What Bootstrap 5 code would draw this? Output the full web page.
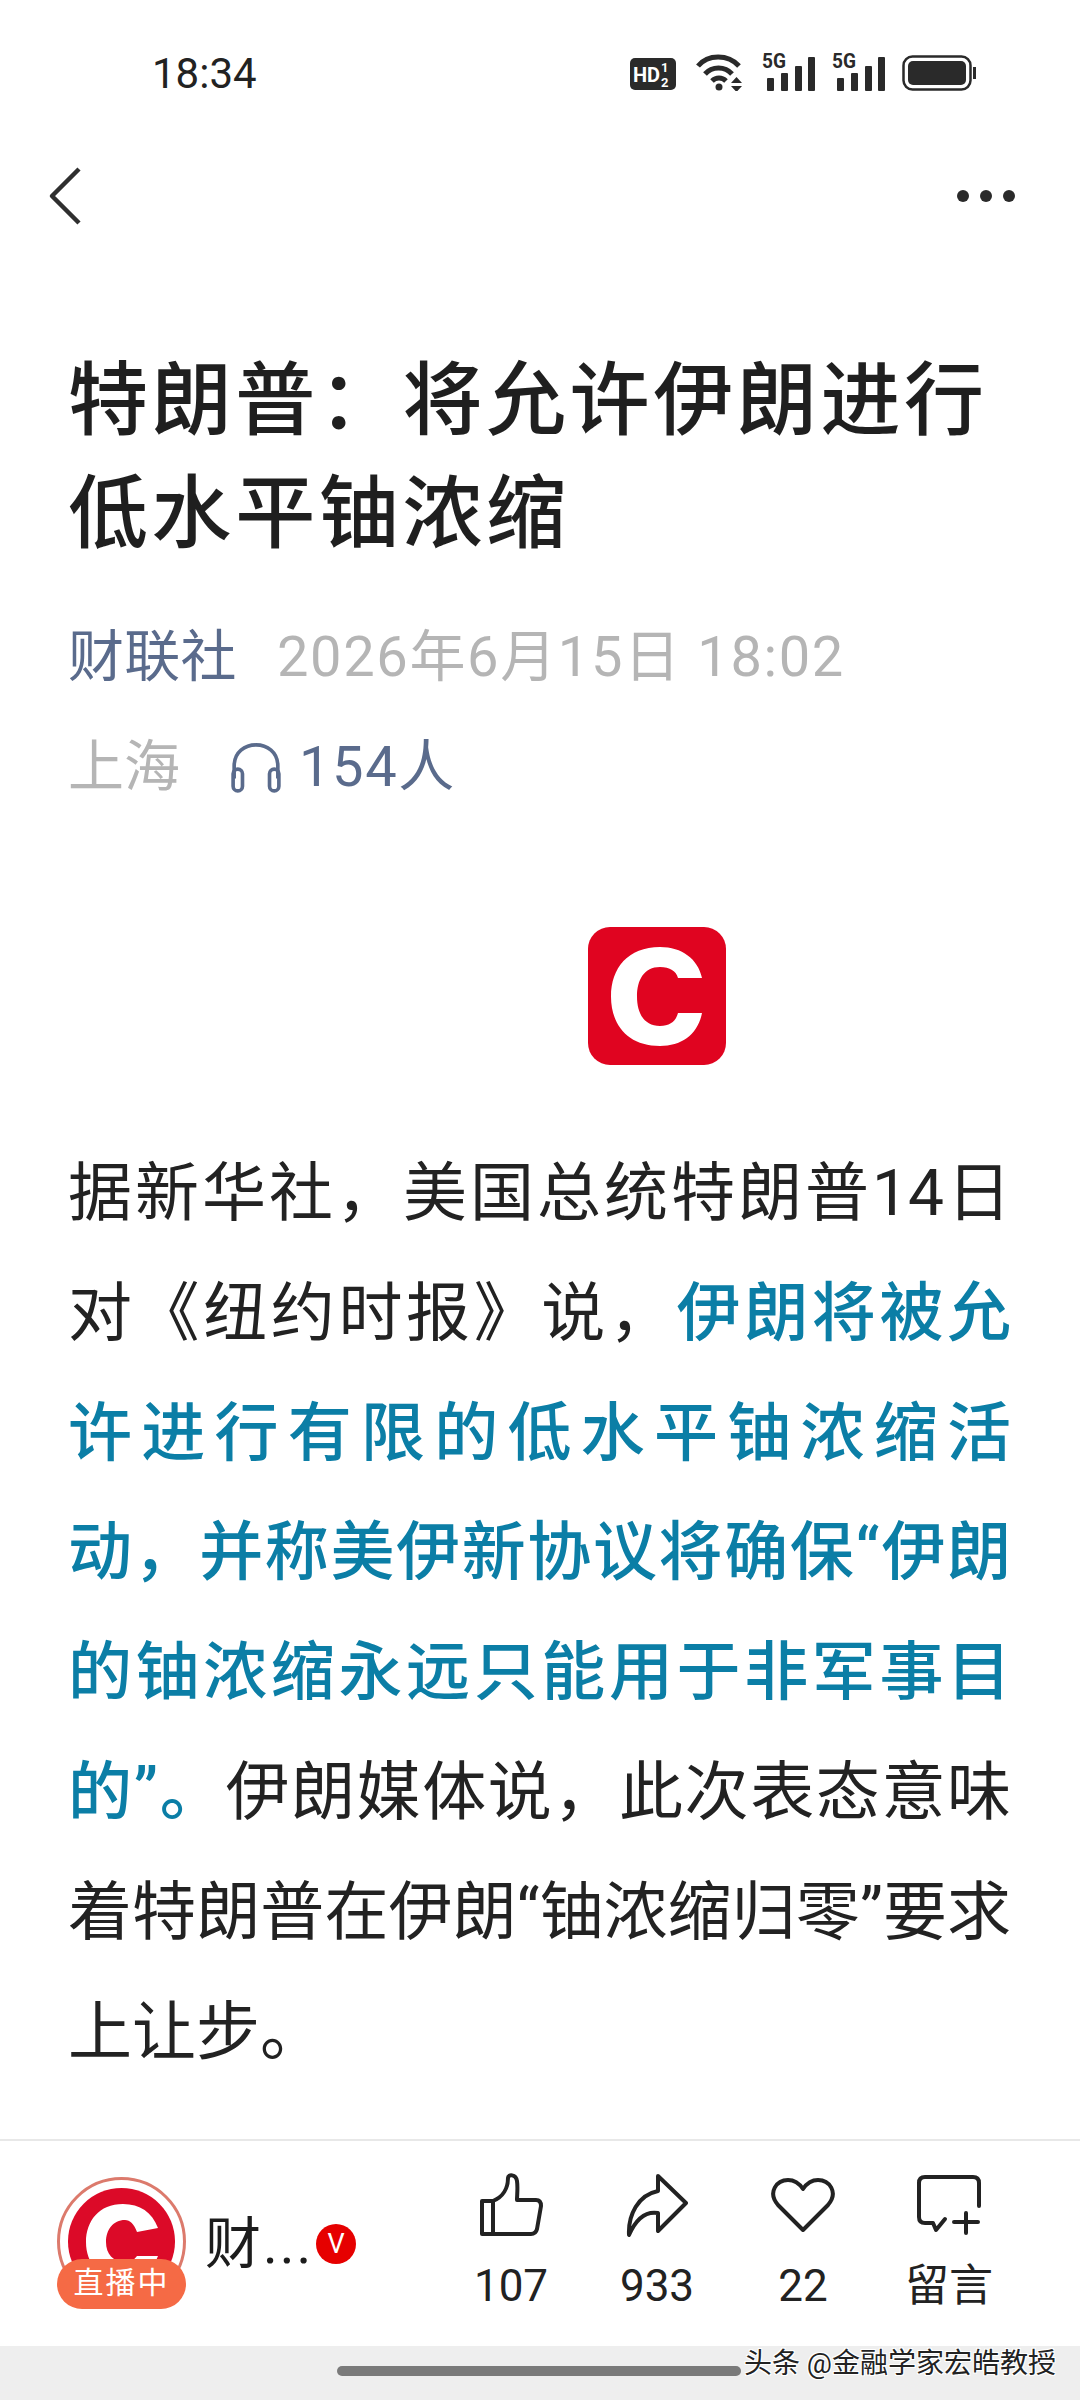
<!DOCTYPE html>
<html lang="zh-CN">
<head>
  <meta charset="UTF-8" />
  <title>特朗普：将允许伊朗进行低水平铀浓缩</title>
  <link href="https://cdn.jsdelivr.net/npm/bootstrap@5.3.0/dist/css/bootstrap.min.css" rel="stylesheet" />
  <style>
    html, body { height: 2400px; }
    body {
      width: 1080px;
      overflow: hidden;
      background: #fff;
      color: #1c1c1c;
      font-family: Roboto, "Noto Sans CJK SC", sans-serif;
    }
    .phone-page { height: 2400px; }

    .status-row { height: 144px; padding: 47px 0 0 152px; }
    .status-time { font-size: 42px; line-height: 40px; color: #222; width: 478px; margin-top: 7px; }
    .status-icons { gap: 16px; }

    .top-row { height: 116px; padding: 0 64px 12px 46px; }

    .article-body { padding: 0 69px 0 68px; }
    .article-title {
      font-size: 80px;
      line-height: 113px;
      font-weight: 500;
      letter-spacing: 3.6px;
      color: #1f1f1f;
      margin: 85px 0 0;
    }
    .meta-line { font-size: 56px; line-height: 64px; letter-spacing: 1.65px; color: #b5b5b5; }
    .meta-one { margin-top: 54px; }
    .meta-two { margin-top: 46px; }
    .meta-author { color: #5a6b8c; margin-right: 40px; letter-spacing: .3px; }
    .meta-place { width: 161px; letter-spacing: 0; }
    .meta-listen { color: #5a6b8c; gap: 16px; letter-spacing: 1.6px; }

    .logo-wrap { margin: 128px 0 0 520px; height: 138px; }

    .article-text {
      font-size: 64px;
      line-height: 119.8px;
      text-align: justify;
      color: #222;
      margin: 69px 0 0;
    }
    .hl-text { color: #0b7ea6; font-weight: 500; }

    .action-bar {
      height: 207px;
      border-top: 2px solid #e8e8e8;
      padding-left: 57px;
    }
    .avatar-box { width: 129px; height: 133px; }
    .avatar-ring { width: 129px; height: 129px; border: 3px solid #dc7a6c; border-radius: 50%; padding: 8px; background: #fff; }
    .live-pill {
      position: absolute;
      left: 0; right: 0; top: 82px;
      height: 50px;
      line-height: 48px;
      border-radius: 25px;
      background: #f56a45;
      color: #fff;
      font-size: 30px;
      letter-spacing: 2px;
      text-align: center;
    }
    .author-name { font-size: 56px; line-height: 64px; margin-left: 19px; width: 111px; white-space: nowrap; letter-spacing: 2px; }
    .v-badge {
      width: 40px; height: 40px;
      border-radius: 50%;
      background: #e60000;
      color: #fff;
      font-size: 27px;
      line-height: 40px;
      text-align: center;
    }
    .action-list { margin-left: auto; margin-right: 58px; margin-bottom: 4px; }
    .action-item { width: 146px; height: 144px; }
    .action-icon { height: 70px; margin-bottom: 18px; }
    .action-label { font-size: 44px; line-height: 56px; color: #222; }

    .nav-strip { height: 54px; background: #eee; }
    .home-bar { width: 404px; height: 10px; margin: 20px 0 0 337px; border-radius: 5px; background: #7a7a7a; }
    .water-mark {
      position: absolute;
      right: 24px; top: 0;
      font-size: 28px;
      line-height: 36px;
      color: #222;
      text-shadow: -1px -1px 0 #fff, 1px 1px 0 #fff, 1px -1px 0 #fff, -1px 1px 0 #fff;
    }
  </style>
</head>
<body>

<div class="phone-page d-flex flex-column">

  <!-- status bar -->
  <div class="status-row d-flex align-items-start">
    <div class="status-time">18:34</div>
    <div class="status-icons d-flex align-items-end">
      <svg class="me-1" width="46" height="33" viewBox="0 0 46 33"><rect width="46" height="32" rx="5" fill="#2a2a2a"/><text x="3" y="24" font-family="Roboto" font-weight="700" font-size="20" fill="#fff">HD</text><text x="31" y="14" font-family="Roboto" font-weight="700" font-size="13" fill="#fff">1</text><text x="31" y="29" font-family="Roboto" font-weight="700" font-size="13" fill="#fff">2</text></svg>
      <svg width="50" height="38" viewBox="0 0 50 38" fill="none" stroke="#2a2a2a" stroke-width="5"><path d="M2 13C12 1 32 1 43 13"/><path d="M9 21C16 13 29 13 36 21"/><path d="M16 28C20 24 26 24 30 28"/><circle cx="23" cy="34" r="3.5" fill="#2a2a2a" stroke="none"/><path d="M35 30h11l-5.500-6zM35 33h11l-5.500 6z" fill="#2a2a2a" stroke="none"/></svg>
      <svg width="54" height="44" viewBox="0 -6 54 44"><text x="0" y="15" font-family="Roboto" font-weight="700" font-size="21" textLength="24" lengthAdjust="spacingAndGlyphs" fill="#2a2a2a">5G</text><rect x="5" y="25" width="7" height="13" rx="1" fill="#2a2a2a"/><rect x="19" y="20" width="7" height="18" rx="1" fill="#2a2a2a"/><rect x="33" y="13" width="7" height="25" rx="1" fill="#2a2a2a"/><rect x="46" y="4" width="7" height="34" rx="1" fill="#2a2a2a"/></svg>
      <svg width="54" height="44" viewBox="0 -6 54 44"><text x="0" y="15" font-family="Roboto" font-weight="700" font-size="21" textLength="24" lengthAdjust="spacingAndGlyphs" fill="#2a2a2a">5G</text><rect x="5" y="25" width="7" height="13" rx="1" fill="#2a2a2a"/><rect x="19" y="20" width="7" height="18" rx="1" fill="#2a2a2a"/><rect x="33" y="13" width="7" height="25" rx="1" fill="#2a2a2a"/><rect x="46" y="4" width="7" height="34" rx="1" fill="#2a2a2a"/></svg>
      <svg width="76" height="36" viewBox="0 0 76 36"><rect x="1.500" y="1.500" width="67" height="33" rx="9" fill="none" stroke="#2a2a2a" stroke-width="2.500"/><rect x="6" y="6" width="58" height="24" rx="5" fill="#2a2a2a"/><rect x="71" y="12" width="3" height="12" fill="#2a2a2a"/></svg>
    </div>
  </div>

  <!-- back and more -->
  <div class="top-row d-flex align-items-center justify-content-between">
    <svg width="36" height="58" viewBox="0 0 36 58" fill="none" stroke="#2f2f2f" stroke-width="4.500"><path d="M33 2L6 29L33 56" stroke-linejoin="round"/></svg>
    <svg width="60" height="14" viewBox="0 0 60 14" fill="#2a2a2a"><circle cx="7" cy="7" r="6"/><circle cx="30" cy="7" r="6"/><circle cx="53" cy="7" r="6"/></svg>
  </div>

  <!-- article -->
  <div class="article-body flex-grow-1">
    <h1 class="article-title">特朗普：将允许伊朗进行低水平铀浓缩</h1>
    <div class="meta-line meta-one d-flex"><span class="meta-author">财联社</span><span>2026年6月15日 18:02</span></div>
    <div class="meta-line meta-two d-flex align-items-center">
      <span class="meta-place">上海</span>
      <span class="meta-listen d-flex align-items-center">
        <svg width="54" height="52" viewBox="0 0 50 50" fill="none" stroke="#5a6b8c" stroke-width="3.500"><path d="M4 36V24C4 -3 46 -3 46 24V36"/><rect x="3" y="27" width="9" height="21" rx="4.500"/><rect x="38" y="27" width="9" height="21" rx="4.500"/></svg>
        154人
      </span>
    </div>
    <div class="logo-wrap">
      <svg class="d-block" width="138" height="138" viewBox="0 0 138 138"><rect width="138" height="138" rx="22" fill="#e00420"/><path d="M114 51C110 32 94 20 72 20C40 20 23 41 23 69.500C23 98 40 119 72 119C94 119 110 107 114 86H90C88 94 82 99 72 99C56 99 49 86 49 69.500C49 53 56 40 72 40C82 40 88 44 90 51Z" fill="#fff"/></svg>
    </div>
    <p class="article-text">据新华社，美国总统特朗普14日对《纽约时报》说，<span class="hl-text">伊朗将被允许进行有限的低水平铀浓缩活动，并称美伊新协议将确保“伊朗的铀浓缩永远只能用于非军事目的”。</span>伊朗媒体说，此次表态意味着特朗普在伊朗“铀浓缩归零”要求上让步。</p>
  </div>

  <!-- bottom actions -->
  <div class="action-bar d-flex align-items-center">
    <div class="avatar-box position-relative flex-shrink-0 mt-n1">
      <div class="avatar-ring">
        <svg width="107" height="107" viewBox="0 0 107 107" class="d-block"><circle cx="53.500" cy="53.500" r="53.500" fill="#dc0a28"/><path d="M90 40C84 24 72 16 55 16C31 16 18 33 18 54C18 75 31 92 55 92C72 92 84 84 90 68H69C66 72 62 74 57 74C45 74 38 66 38 54C38 42 45 32 57 32C62 32 66 36 69 44Z" fill="#fff"/></svg>
      </div>
      <div class="live-pill">直播中</div>
    </div>
    <div class="author-name">财...</div>
    <div class="v-badge flex-shrink-0">V</div>
    <div class="action-list d-flex">
      <div class="action-item d-flex flex-column align-items-center">
        <div class="action-icon d-flex align-items-center"><svg width="64" height="64" viewBox="0 0 64 64" fill="none" stroke="#222" stroke-width="4" stroke-linejoin="round"><path d="M3 28H14V61H3ZM14 28C24 24 29 15 29 5C29 1 37 1 38 8C39 15 38 22 38 27H57C61 27 62 30 62 33L58 56C57 60 55 61 52 61H14"/></svg></div>
        <div class="action-label">107</div>
      </div>
      <div class="action-item d-flex flex-column align-items-center">
        <div class="action-icon d-flex align-items-center"><svg width="62" height="64" viewBox="0 0 62 64" fill="none" stroke="#222" stroke-width="4" stroke-linejoin="round"><path d="M3 62C2 42 12 22 32 18V3L60 30L32 58V40C20 38 10 46 3 62Z"/></svg></div>
        <div class="action-label">933</div>
      </div>
      <div class="action-item d-flex flex-column align-items-center">
        <div class="action-icon d-flex align-items-center"><svg width="64" height="54" viewBox="0 0 64 54" fill="none" stroke="#222" stroke-width="4" stroke-linejoin="round"><path d="M32 52L7 27C-4 14 6 2 17 2C23 2 28 5 32 11C36 5 41 2 47 2C58 2 68 14 57 27Z"/></svg></div>
        <div class="action-label">22</div>
      </div>
      <div class="action-item d-flex flex-column align-items-center">
        <div class="action-icon d-flex align-items-center"><svg width="66" height="60" viewBox="0 0 66 60" fill="none" stroke="#222" stroke-width="4" stroke-linecap="round" stroke-linejoin="round"><path d="M63 31V8C63 4 61 2 57 2H9C5 2 3 4 3 8V42C3 46 5 48 9 48H17L20 55L29 44"/><path d="M50 38V58M38 47H62"/></svg></div>
        <div class="action-label">留言</div>
      </div>
    </div>
  </div>

  <div class="nav-strip position-relative">
    <div class="home-bar"></div>
    <div class="water-mark">头条 @金融学家宏皓教授</div>
  </div>

</div>

<script src="https://cdn.jsdelivr.net/npm/bootstrap@5.3.0/dist/js/bootstrap.bundle.min.js"></script>
</body>
</html>
